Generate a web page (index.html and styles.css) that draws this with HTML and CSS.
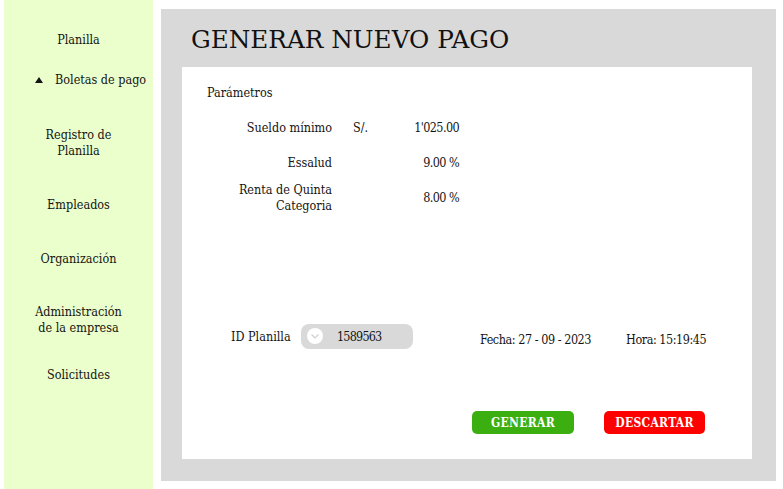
FILE: index.html
```html
<!DOCTYPE html>
<html lang="es">
<head>
<meta charset="utf-8">
<title>Generar nuevo pago</title>
<link rel="stylesheet" href="styles.css">
</head>
<body>
<div class="app">
  <nav class="sidebar">
    <div class="nav-item nav-planilla">Planilla</div>
    <div class="nav-item nav-boletas"><span class="tri"></span><span>Boletas de pago</span></div>
    <div class="nav-item nav-registro">Registro de<br>Planilla</div>
    <div class="nav-item nav-empleados">Empleados</div>
    <div class="nav-item nav-org">Organización</div>
    <div class="nav-item nav-admin">Administración<br>de la empresa</div>
    <div class="nav-item nav-sol">Solicitudes</div>
  </nav>
  <main class="main">
    <h1 class="title">GENERAR NUEVO PAGO</h1>
    <section class="card">
      <div class="section-label">Parámetros</div>
      <div class="params">
        <div class="p-label">Sueldo mínimo</div>
        <div class="p-unit">S/.</div>
        <div class="p-value">1'025.00</div>
        <div class="p-label">Essalud</div>
        <div class="p-unit"></div>
        <div class="p-value">9.00 %</div>
        <div class="p-label">Renta de Quinta<br>Categoria</div>
        <div class="p-unit"></div>
        <div class="p-value">8.00 %</div>
      </div>
      <div class="info-row">
        <span class="id-label">ID Planilla</span>
        <div class="select">
          <span class="select-icon">
            <svg width="16" height="16" viewBox="0 0 16 16"><circle cx="8" cy="8" r="8" fill="#ffffff"/><path d="M4.5 6.5 L8 10 L11.5 6.5" fill="none" stroke="#d0d0d0" stroke-width="1.2"/></svg>
          </span>
          <span class="select-value">1589563</span>
        </div>
        <span class="fecha">Fecha: 27 - 09 - 2023</span>
        <span class="hora">Hora: 15:19:45</span>
      </div>
      <div class="actions">
        <button class="btn btn-green">GENERAR</button>
        <button class="btn btn-red">DESCARTAR</button>
      </div>
    </section>
  </main>
</div>
</body>
</html>
```

FILE: styles.css
```css
* { box-sizing: border-box; }
html, body { margin: 0; padding: 0; background: #ffffff; }
body {
  font-family: "DejaVu Serif Condensed", "DejaVu Serif", "Liberation Serif", serif;
  font-stretch: condensed;
  color: #141414;
  font-size: 12.5px;
  width: 783px;
  height: 489px;
  overflow: hidden;
}
.app {
  display: flex;
  align-items: flex-start;
  height: 489px;
}
.sidebar {
  width: 149px;
  height: 489px;
  margin-left: 4px;
  background: #eaffcc;
  display: flex;
  flex-direction: column;
  align-items: center;
  padding-top: 32px;
}
.nav-item {
  line-height: 16px;
  text-align: center;
}
.nav-boletas {
  align-self: stretch;
  display: flex;
  align-items: center;
  padding-left: 31px;
  margin-top: 24px;
}
.tri {
  width: 0; height: 0;
  border-left: 4px solid transparent;
  border-right: 4px solid transparent;
  border-bottom: 6px solid #141414;
  margin-right: 12px;
}
.nav-registro { margin-top: 39px; }
.nav-empleados { margin-top: 38px; }
.nav-org { margin-top: 38px; }
.nav-admin { margin-top: 37px; }
.nav-sol { margin-top: 31px; }

.main {
  margin-left: 8px;
  margin-top: 9px;
  width: 615px;
  height: 472px;
  background: #d9d9d9;
  display: flex;
  flex-direction: column;
  padding: 0 24px 22px 21px;
}
.title {
  margin: 0;
  height: 58px;
  padding-left: 9px;
  padding-top: 16px;
  font-family: "DejaVu Serif", serif;
  font-stretch: normal;
  font-size: 24.7px;
  font-weight: normal;
  line-height: 30px;
  color: #111;
}
.card {
  background: #ffffff;
  flex: 1;
  padding: 18px 0 0 0;
  display: flex;
  flex-direction: column;
}
.section-label {
  padding-left: 25px;
  line-height: 16px;
}
.params {
  display: grid;
  grid-template-columns: 171px 30px 77px;
  grid-auto-rows: 35px;
  align-items: center;
  margin-top: 9px;
  line-height: 16px;
}
.p-label { text-align: right; padding-right: 21px; }
.p-value { text-align: right; letter-spacing: -0.6px; padding-right: 1px; }
.info-row {
  display: flex;
  align-items: center;
  margin-top: 108px;
  padding-left: 49px;
  height: 26px;
}
.id-label { width: 70px; }
.select {
  width: 112px;
  height: 25px;
  border-radius: 8px;
  background: #d9d9d9;
  display: flex;
  align-items: center;
  padding-left: 6px;
}
.select-icon { display: flex; width: 16px; height: 16px; }
.select-value { margin-left: 14px; letter-spacing: -0.8px; }
.fecha { margin-left: 67px; padding-top: 6px; letter-spacing: -0.45px; }
.hora { margin-left: 35px; padding-top: 6px; letter-spacing: -0.45px; }
.actions {
  display: flex;
  gap: 30px;
  margin-top: 62px;
  padding-left: 290px;
}
.btn {
  font-family: "DejaVu Serif Condensed", "DejaVu Serif", serif;
  font-stretch: condensed;
  font-weight: bold;
  font-size: 12px;
  color: #ffffff;
  border: none;
  border-radius: 5px;
  height: 23px;
  padding: 0;
  letter-spacing: 0.3px;
}
.btn-green { background: #3caf10; width: 102px; }
.btn-red { background: #ff0000; width: 101px; }
```
